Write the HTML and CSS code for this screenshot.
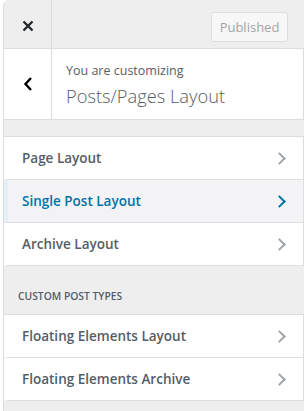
FILE: index.html
```html
<!DOCTYPE html>
<html lang="en">
  <head>
    <meta charset="UTF-8" />
    <meta name="viewport" content="width=device-width, initial-scale=1.0" />
    <title>Customize - Posts/Pages Layout</title>
    <link rel="stylesheet" href="styles.css">
  </head>
  <body>
    <div class="sidebar">
      <div class="header">
        <button class="close-btn" aria-label="Close">
          <svg width="12" height="12" viewBox="0 0 12 12"><path d="M1.5 1.5 L10.5 10.5 M10.5 1.5 L1.5 10.5" stroke="#23282d" stroke-width="2.4" fill="none"/></svg>
        </button>
        <div class="header-actions">
          <button class="publish-btn" disabled>Published</button>
        </div>
      </div>

      <div class="panel-info">
        <button class="back-btn" aria-label="Back">
          <svg width="10" height="16" viewBox="0 0 10 16"><polyline points="8,2 2.5,8 8,14" stroke="#000" stroke-width="2.4" fill="none"/></svg>
        </button>
        <div class="panel-title">
          <span class="small">You are customizing</span>
          <span class="big">Posts/Pages Layout</span>
        </div>
      </div>

      <div class="spacer"></div>

      <ul class="sections">
        <li class="section">Page Layout <span class="chev"></span></li>
        <li class="section active">Single Post Layout <span class="chev"></span></li>
        <li class="section">Archive Layout <span class="chev"></span></li>
      </ul>

      <h4 class="group-title">Custom Post Types</h4>

      <ul class="sections">
        <li class="section">Floating Elements Layout <span class="chev"></span></li>
        <li class="section">Floating Elements Archive <span class="chev"></span></li>
      </ul>
    </div>
  </body>
</html>
```

FILE: styles.css
```css
body {
  margin: 0;
  padding-left: 3px;
  font-family: "Open Sans", "Noto Sans", sans-serif;
  background-color: #fff;
  color: #555d66;
  height: 411px;
  overflow: hidden;
}
.sidebar {
  background-color: #eee;
  border-left: 1px solid #ddd;
  border-top-left-radius: 6px;
  height: 411px;
}
.header {
  display: flex;
  height: 48px;
  border-bottom: 1px solid #ddd;
}
.close-btn,
.back-btn {
  width: 48px;
  border: none;
  border-right: 1px solid #ddd;
  background: none;
  padding: 0;
  display: flex;
  align-items: center;
  justify-content: center;
}
.close-btn {
  padding-top: 4px;
}
.header-actions {
  flex: 1;
  display: flex;
  justify-content: flex-end;
  align-items: center;
  padding-right: 16px;
  padding-top: 6px;
}
.publish-btn {
  font-family: "Open Sans", "Noto Sans", sans-serif;
  font-size: 13px;
  color: #a0a5aa;
  background-color: #f7f7f7;
  border: 1px solid #ddd;
  border-radius: 3px;
  height: 30px;
  width: 77px;
  padding: 0;
}
.panel-info {
  display: flex;
  height: 70px;
  background-color: #fff;
  border-bottom: 1px solid #ddd;
  border-right: 1px solid #ddd;
}
.panel-title {
  display: flex;
  flex-direction: column;
  padding: 12px 0 0 14px;
}
.panel-title .small {
  font-size: 12.5px;
  line-height: 20px;
  color: #555d66;
}
.panel-title .big {
  font-size: 18.3px;
  font-weight: 300;
  line-height: 30px;
  color: #555d66;
}
.spacer {
  height: 16px;
}
.sections {
  list-style: none;
  margin: 0;
  padding: 0;
  border-top: 1px solid #ddd;
}
.section {
  display: flex;
  justify-content: space-between;
  align-items: center;
  height: 42px;
  padding: 0 17px 0 14px;
  background-color: #fff;
  border-bottom: 1px solid #ddd;
  border-right: 1px solid #ddd;
  border-left: 4px solid #fff;
  font-size: 13.5px;
  font-weight: 600;
  color: #555d66;
}
.section.active {
  background-color: #f3f3f5;
  border-left-color: #e5eff7;
  color: #0073aa;
}
.chev {
  width: 7px;
  height: 7px;
  border-top: 2px solid #a0a5aa;
  border-right: 2px solid #a0a5aa;
  transform: rotate(45deg);
  margin-right: 2px;
}
.section.active .chev {
  border-color: #0073aa;
}
.group-title {
  margin: 0;
  height: 48px;
  box-sizing: border-box;
  padding: 23px 0 0 14px;
  font-size: 10.3px;
  font-weight: 600;
  text-transform: uppercase;
  color: #555d66;
}
```
